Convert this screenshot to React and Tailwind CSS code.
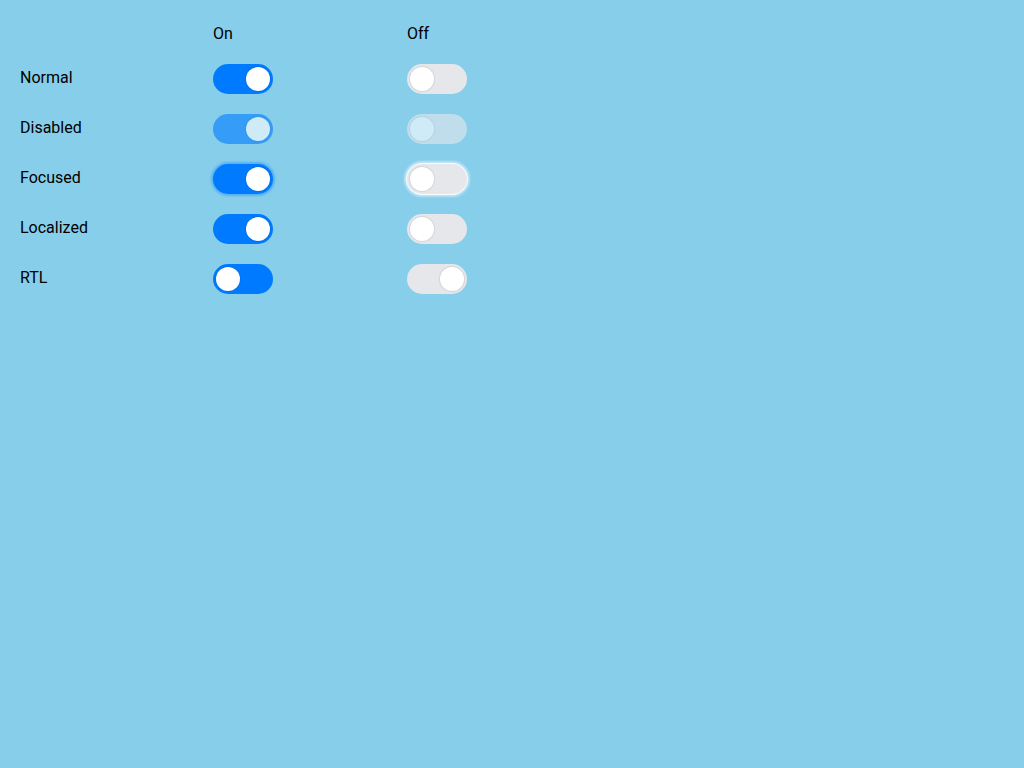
import React from 'react';

const Toggle = ({ on, disabled, focused, rtl }) => {
  // knob goes right when on (left when rtl)
  const knobRight = rtl ? !on : on;
  const track = on ? 'bg-[#007bff]' : 'bg-[#e5e7eb]';
  let ring = '';
  if (focused) {
    ring = on
      ? 'shadow-[0_0_2px_2px_rgba(0,123,255,0.35)]'
      : 'shadow-[0_0_0_1px_rgba(255,255,255,0.9),0_0_2px_3px_rgba(255,255,255,0.45)]';
  }
  return (
    <div
      className={`w-[60px] h-[30px] rounded-full p-[3px] flex ${knobRight ? 'justify-end' : 'justify-start'} ${track} ${ring} ${disabled ? 'opacity-60' : ''}`}
    >
      <div className="w-[24px] h-[24px] rounded-full bg-white shadow-[0_0_1px_1px_rgba(0,0,0,0.08)]" />
    </div>
  );
};

const rows = [
  { label: 'Normal' },
  { label: 'Disabled', disabled: true },
  { label: 'Focused', focused: true },
  { label: 'Localized' },
  { label: 'RTL', rtl: true },
];

export default function App() {
  return (
    <div
      className="min-h-screen bg-[#87ceeb] pl-[20px] pt-[22px] text-[16px] text-black"
      style={{ fontFamily: 'Roboto, "Noto Sans", sans-serif' }}
    >
      <div className="grid grid-cols-[193px_194px_auto] h-[24px] leading-[24px] mb-[8px]">
        <div />
        <div>On</div>
        <div>Off</div>
      </div>
      {rows.map((r) => (
        <div key={r.label} className="grid grid-cols-[193px_194px_auto] h-[50px] items-center">
          <div className="leading-[24px] pb-[2px]">{r.label}</div>
          <div>
            <Toggle on disabled={r.disabled} focused={r.focused} rtl={r.rtl} />
          </div>
          <div>
            <Toggle on={false} disabled={r.disabled} focused={r.focused} rtl={r.rtl} />
          </div>
        </div>
      ))}
    </div>
  );
}
